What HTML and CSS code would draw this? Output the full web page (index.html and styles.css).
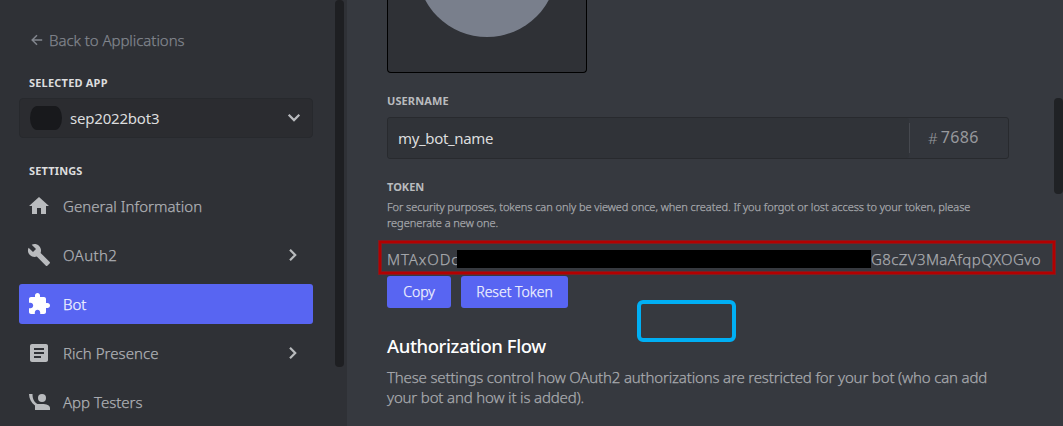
FILE: index.html
```html
<!DOCTYPE html>
<html lang="en">
<head>
<meta charset="utf-8">
<title>Bot settings</title>
<link rel="stylesheet" href="styles.css">
</head>
<body>
<div class="app">
  <aside class="sidebar">
    <div class="sidebar-inner">
      <a class="back"><svg class="back-icon" width="12" height="12" viewBox="0 0 12 12"><path d="M11.2 6H1.4M6 1.2L1.2 6L6 10.8" fill="none" stroke="currentColor" stroke-width="1.5"/></svg><span>Back to Applications</span></a>
      <h2 class="side-label selected-label">Selected App</h2>
      <div class="select">
        <span class="avatar"></span>
        <span class="select-name">sep2022bot3</span>
        <svg width="14" height="10" viewBox="0 0 14 10"><path d="M1.7 1.8L7 7.1L12.3 1.8" fill="none" stroke="currentColor" stroke-width="2.2"/></svg>
      </div>
      <h2 class="side-label settings-label">Settings</h2>
      <nav class="nav">
        <a class="item"><svg class="icon" viewBox="0 0 24 24"><path d="M10 20v-6h4v6h5v-8h3L12 3 2 12h3v8z"/></svg><span class="t-general">General Information</span></a>
        <a class="item"><svg class="icon" viewBox="0 0 24 24"><path d="M22.7 19l-9.1-9.1c.9-2.3.4-5-1.5-6.9-2-2-5-2.4-7.4-1.3L9 6 6 9 1.6 4.7C.4 7.1.9 10.1 2.9 12.1c1.9 1.9 4.6 2.4 6.9 1.5l9.1 9.1c.4.4 1 .4 1.4 0l2.3-2.3c.5-.4.5-1.1.1-1.4z"/></svg><span class="t-oauth">OAuth2</span><svg class="chevron" viewBox="0 0 10 14"><path d="M2 1.8L7.2 7L2 12.2"/></svg></a>
        <a class="item active"><svg class="icon" viewBox="0 0 24 24"><path d="M20.5 11H19V7c0-1.1-.9-2-2-2h-4V3.500C13 2.120 11.880 1 10.500 1S8 2.120 8 3.500V5H4c-1.100 0-1.990.9-1.990 2v3.800H3.500c1.490 0 2.700 1.210 2.700 2.700s-1.210 2.700-2.700 2.700H2V20c0 1.100.9 2 2 2h3.800v-1.500c0-1.490 1.210-2.700 2.700-2.700 1.490 0 2.700 1.210 2.700 2.700V22H17c1.100 0 2-.9 2-2v-4h1.500c1.380 0 2.500-1.120 2.500-2.500S21.880 11 20.500 11z"/></svg><span class="t-bot">Bot</span></a>
        <a class="item"><svg class="icon" viewBox="0 0 24 24"><path d="M19 3H5c-1.100 0-2 .9-2 2v14c0 1.100.9 2 2 2h14c1.100 0 2-.9 2-2V5c0-1.100-.9-2-2-2zM14 17H7v-2h7v2zm3-4H7v-2h10v2zm0-4H7V7h10v2z"/></svg><span class="t-rich">Rich Presence</span><svg class="chevron" viewBox="0 0 10 14"><path d="M2 1.800L7.200 7L2 12.200"/></svg></a>
        <a class="item"><svg class="icon" viewBox="0 0 24 24"><circle cx="15" cy="8" r="4"/><path d="M2 4H5.500C5.500 8.500 7 12.300 10.500 14H15C19.500 14 23 15.300 23 18V20H8V15.500C4.200 12.800 2.200 9 2 4Z"/></svg><span class="t-testers">App Testers</span></a>
      </nav>
    </div>
    <div class="side-scroll"></div>
  </aside>
  <main class="content">
    <div class="upload"><div class="portrait"></div></div>
    <h3 class="label username-label">Username</h3>
    <div class="field">
      <div class="field-name"><span>my_bot_name</span></div>
      <div class="tag"><span class="hash">#</span><span class="digits">7686</span></div>
    </div>
    <h3 class="label token-label">Token</h3>
    <p class="hint"><span class="hint-a">For security purposes, tokens can only be viewed once, when created. If you forgot or lost access to your token, please</span><br><span class="hint-b">regenerate a new one.</span></p>
    <div class="token"><span class="token-start">MTAxODc</span><span class="redacted"></span><span class="token-end">G8cZV3MaAfqpQXOGvo</span></div>
    <div class="actions"><button class="copy"><span>Copy</span></button><button class="reset"><span>Reset Token</span></button></div>
    <h1 class="heading"><span>Authorization Flow</span></h1>
    <p class="description"><span class="desc-a">These settings control how OAuth2 authorizations are restricted for your bot (who can add</span><br><span class="desc-b">your bot and how it is added).</span></p>
    <div class="callout"></div>
    <div class="page-scroll"></div>
  </main>
</div>
</body>
</html>
```
FILE: styles.css
```css
* { box-sizing: border-box; }
body { margin: 0; background: #36393f; font-family: "Noto Sans", sans-serif; font-weight: 300; }
h1, h2, h3, p { margin: 0; }
span { white-space: nowrap; }
.app { display: flex; width: 1063px; height: 426px; overflow: hidden; }

.sidebar { display: flex; width: 347px; height: 426px; background: #2f3136; flex: none; }
.sidebar-inner { width: 335px; padding: 29px 22px 0 19px; }
.back { display: flex; align-items: center; gap: 6px; height: 22px; padding-left: 12px; color: #82868e; font-size: 15px; letter-spacing: -.05px; }
.back, .item, .hint, .token, .description, button { -webkit-text-stroke: .25px currentColor; }
.side-label { height: 16px; padding-left: 10px; color: #dcddde; font-size: 11px; line-height: 16px; font-weight: 700; text-transform: uppercase; }
.selected-label { margin-top: 24px; letter-spacing: .2px; }
.select { display: flex; align-items: center; height: 40px; margin-top: 7px; padding: 0 11px 0 10px; background: #2b2c30; border: 1px solid #27292d; border-radius: 4px; color: #b9bbbe; }
.avatar { width: 32px; height: 24px; background: #18191c; border-radius: 7px / 12px; }
.select-name { flex: 1; margin-left: 8px; color: #dcddde; font-size: 15px; font-weight: 400; letter-spacing: -.2px; }
.settings-label { margin-top: 25px; letter-spacing: .15px; }
.nav { display: flex; flex-direction: column; gap: 9px; margin-top: 7px; }
.item { display: flex; align-items: center; height: 40px; flex: none; padding: 0 15px 0 8px; border-radius: 3px; color: #b0b2b6; font-size: 15px; }
.item span { flex: 1; margin-left: 12px; }
.t-general, .t-rich { letter-spacing: .05px; }
.t-oauth { letter-spacing: .4px; }
.icon { width: 24px; height: 24px; fill: #b9bbbe; }
.chevron { width: 10px; height: 14px; fill: none; stroke: #b9bbbe; stroke-width: 2.2; }
.active { background: #5865f2; color: #f2f3fe; }
.active .icon { fill: #fff; }
.side-scroll { width: 9px; height: 367px; background: #1e1f22; border-radius: 4px; }

.content { position: relative; flex: 1; padding-left: 40px; }
.upload { width: 200px; height: 73px; background: #2f3136; border: 1px solid #000; border-top: 0; border-radius: 0 0 4px 4px; overflow: hidden; display: flex; align-items: flex-end; justify-content: center; padding-bottom: 35px; }
.portrait { width: 140px; height: 140px; flex: none; border-radius: 50%; background: #797f8c; }
.label { height: 16px; color: #b9bbbe; font-size: 11px; line-height: 16px; font-weight: 700; text-transform: uppercase; }
.username-label { margin-top: 20px; letter-spacing: .1px; }
.field { display: flex; width: 622px; height: 42px; margin-top: 8px; border: 1px solid #282a2e; border-radius: 3px; background: #33363c; }
.field-name { width: 521px; display: flex; align-items: center; padding-left: 10px; background: #303338; border-radius: 3px; color: #dcddde; font-size: 15px; font-weight: 400; letter-spacing: -.35px; }
.tag { display: flex; align-items: center; margin: 5px 0; padding-left: 18px; border-left: 1px solid #46494f; color: #97999d; font-size: 15px; }
.digits { margin: -2px 0 0 3px; font-size: 16px; font-weight: 400; letter-spacing: .4px; }
.token-label { margin-top: 20px; }
.hint { margin-top: 4px; height: 32px; color: #a9abaf; font-size: 11px; line-height: 16px; letter-spacing: -.045px; }
.token { display: flex; align-items: center; width: 678px; height: 35px; margin: 9px 0 0 -9px; padding: 3px 0 0 8px; border: 1px solid #801c20; box-shadow: inset 0 0 0 2px #b30000, inset 0 0 0 3px #801c20; color: #a9abaf; font-size: 15px; }
.token-start { width: 70px; overflow: hidden; letter-spacing: .9px; }
.token-end { letter-spacing: .4px; }
.redacted { width: 414px; height: 18px; background: #000; }
.actions { display: flex; gap: 10px; margin-top: 1px; }
button { height: 32px; padding: 0 0 1px; border: 0; border-radius: 3px; background: #5865f2; color: #f2f3fe; font: 300 14px "Noto Sans", sans-serif; }
.copy { width: 64px; }
.reset { width: 107px; }
.heading { margin-top: 26px; height: 24px; color: #fff; font-size: 18.5px; line-height: 24px; font-weight: 500; letter-spacing: -.42px; }
.description { margin-top: 9px; color: #a9abaf; font-size: 15px; line-height: 20px; letter-spacing: -.16px; }
.callout { position: absolute; left: 290px; top: 300px; width: 99px; height: 42px; border: 4px solid #00aff4; border-radius: 6px; }
.page-scroll { position: absolute; left: 707px; top: 98px; width: 9px; height: 96px; background: #202225; border-radius: 4px; }
```
